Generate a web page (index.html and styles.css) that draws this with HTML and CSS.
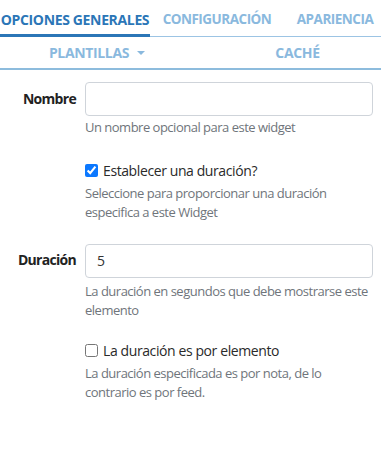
FILE: index.html
```html
<!DOCTYPE html>
<html lang="es">
<head>
<meta charset="utf-8">
<link rel="stylesheet" href="styles.css">
</head>
<body>
<nav class="tabs">
  <div class="tab-row row1">
    <a class="tab t1 active">OPCIONES GENERALES</a>
    <a class="tab t2">CONFIGURACIÓN</a>
    <a class="tab t3">APARIENCIA</a>
  </div>
  <div class="tab-row row2">
    <a class="tab t4">PLANTILLAS <span class="caret"></span></a>
    <a class="tab t5">CACHÉ</a>
  </div>
</nav>
<form class="form">
  <div class="group g-name">
    <label class="label">Nombre</label>
    <div class="field">
      <input class="input" type="text">
      <p class="help help-name">Un nombre opcional para este widget</p>
    </div>
  </div>
  <div class="group g-check1">
    <div></div>
    <div class="field">
      <label class="check"><input type="checkbox" checked> Establecer una duración?</label>
      <p class="help">Seleccione para proporcionar una duración especifica a este Widget</p>
    </div>
  </div>
  <div class="group g-dur">
    <label class="label">Duración</label>
    <div class="field">
      <input class="input" type="text" value="5">
      <p class="help help-dur">La duración en segundos que debe mostrarse este elemento</p>
    </div>
  </div>
  <div class="group g-check2">
    <div></div>
    <div class="field">
      <label class="check"><input type="checkbox"> La duración es por elemento</label>
      <p class="help">La duración especificada es por nota, de lo contrario es por feed.</p>
    </div>
  </div>
</form>
</body>
</html>
```
FILE: styles.css
```css
html, body {
  margin: 0;
  background: #ffffff;
}
body {
  font-family: "Open Sans", "Noto Sans", "Liberation Sans", sans-serif;
  color: #333333;
  overflow: hidden;
}
.tabs {
  display: flex;
  flex-direction: column;
}
.tab-row {
  display: flex;
  white-space: nowrap;
}
.row1 {
  height: 36px;
  border-bottom: 1px solid #9cc4e4;
}
.row2 {
  height: 31px;
  border-bottom: 2px solid #8dbcdd;
}
.tab {
  display: flex;
  align-items: center;
  justify-content: center;
  font-weight: 700;
  font-size: 14px;
  letter-spacing: -0.35px;
  color: #8ab9de;
  box-sizing: border-box;
}
.row1 .tab {
  height: 37px;
  padding-top: 1px;
}
.t1 {
  flex: 0 0 150px;
  color: #2b76b7;
  border-bottom: 3px solid #2b76b7;
  padding-top: 4px !important;
}
.t2 {
  flex: 0 0 134px;
  font-size: 13.5px;
  letter-spacing: -0.5px;
}
.t3 {
  flex: 0 0 102px;
  font-size: 13.5px;
  letter-spacing: -0.5px;
}
.t4 { flex: 0 0 194px; }
.t5 { flex: 1 1 auto; padding-left: 20px; }
.caret {
  display: inline-block;
  width: 0;
  height: 0;
  margin-left: 8px;
  border-left: 4px solid transparent;
  border-right: 4px solid transparent;
  border-top: 4px solid #8ab9de;
  vertical-align: middle;
}
.form {
  padding: 0 8px 0 0;
}
.group {
  display: grid;
  grid-template-columns: 76px 1fr;
  column-gap: 9px;
}
.label {
  font-weight: 700;
  font-size: 14px;
  letter-spacing: -0.7px;
  text-align: right;
  line-height: 20px;
  color: #222222;
}
.field {
  display: flex;
  flex-direction: column;
}
.input {
  box-sizing: border-box;
  height: 34px;
  width: 100%;
  border: 1px solid #cfd4da;
  border-radius: 4px;
  padding: 0 11px;
  font-family: inherit;
  font-size: 14px;
  color: #333;
  margin: 0;
}
.help {
  margin: 0;
  font-size: 13px;
  letter-spacing: -0.5px;
  line-height: 19.5px;
  color: #6f757b;
}
.g-name { margin-top: 12px; }
.g-name .label { padding-top: 7px; }
.help-name { margin-top: 2px; }
.g-check1 { margin-top: 23px; }
.check {
  display: flex;
  align-items: center;
  font-size: 14px;
  letter-spacing: -0.4px;
  line-height: 20px;
  color: #2a2a2a;
  margin-bottom: 3px;
}
.check input {
  width: 13px;
  height: 13px;
  margin: 0 5px 0 0;
  accent-color: #0b78ff;
}
.g-dur { margin-top: 21px; }
.g-dur .label { padding-top: 6px; }
.help-dur { margin-top: 4px; }
.g-check2 { margin-top: 20px; }
```
